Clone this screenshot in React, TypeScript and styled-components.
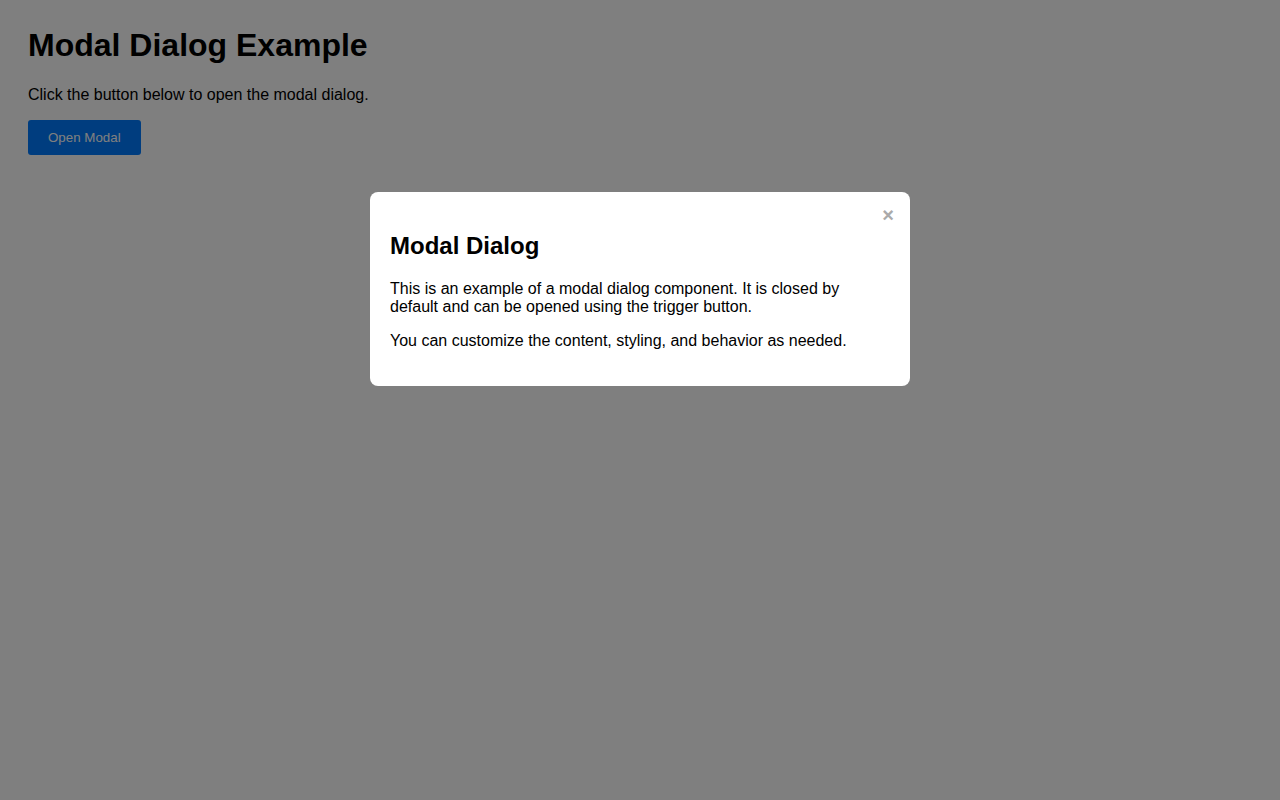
import * as React from "react";
import styled, { createGlobalStyle } from "styled-components";

const GlobalStyle = createGlobalStyle`
  html, body {
    margin: 0;
    padding: 0;
    background: #ffffff;
    font-family: "Liberation Sans", Arial, sans-serif;
    color: #000000;
  }
`;

const Page = styled.div`
  padding: 27px 28px;
`;

const Title = styled.h1`
  font-size: 32px;
  font-weight: bold;
  margin: 0 0 22px;
`;

const Intro = styled.p`
  font-size: 16px;
  margin: 0 0 16px;
`;

const TriggerButton = styled.button`
  font-family: "Liberation Sans", Arial, sans-serif;
  font-size: 13.33px;
  padding: 10px 20px;
  background: #007bff;
  color: #ffffff;
  border: none;
  border-radius: 3px;
  cursor: pointer;
`;

const Overlay = styled.div`
  position: fixed;
  inset: 0;
  background: rgba(0, 0, 0, 0.5);
  overflow: auto;
`;

const Dialog = styled.div`
  position: relative;
  box-sizing: border-box;
  width: 540px;
  margin: 192px auto 0;
  padding: 20px;
  background: #ffffff;
  border-radius: 8px;
`;

const CloseButton = styled.span`
  position: absolute;
  top: 12px;
  right: 16px;
  font-size: 20px;
  font-weight: bold;
  color: #aaaaaa;
  cursor: pointer;
  line-height: normal;
`;

const DialogTitle = styled.h2`
  font-size: 24px;
  font-weight: bold;
  margin: 20px 0;
`;

const DialogText = styled.p`
  font-size: 16px;
  margin: 16px 0;
`;

const App = () => {
  const [open, setOpen] = React.useState(true);

  return (
    <>
      <GlobalStyle />
      <Page>
        <Title>Modal Dialog Example</Title>
        <Intro>Click the button below to open the modal dialog.</Intro>
        <TriggerButton onClick={() => setOpen(true)}>Open Modal</TriggerButton>
      </Page>
      {open && (
        <Overlay onClick={() => setOpen(false)}>
          <Dialog onClick={e => e.stopPropagation()}>
            <CloseButton onClick={() => setOpen(false)}>×</CloseButton>
            <DialogTitle>Modal Dialog</DialogTitle>
            <DialogText>
              This is an example of a modal dialog component. It is closed by default and can be opened using
              the trigger button.
            </DialogText>
            <DialogText>You can customize the content, styling, and behavior as needed.</DialogText>
          </Dialog>
        </Overlay>
      )}
    </>
  );
};

export default App;
